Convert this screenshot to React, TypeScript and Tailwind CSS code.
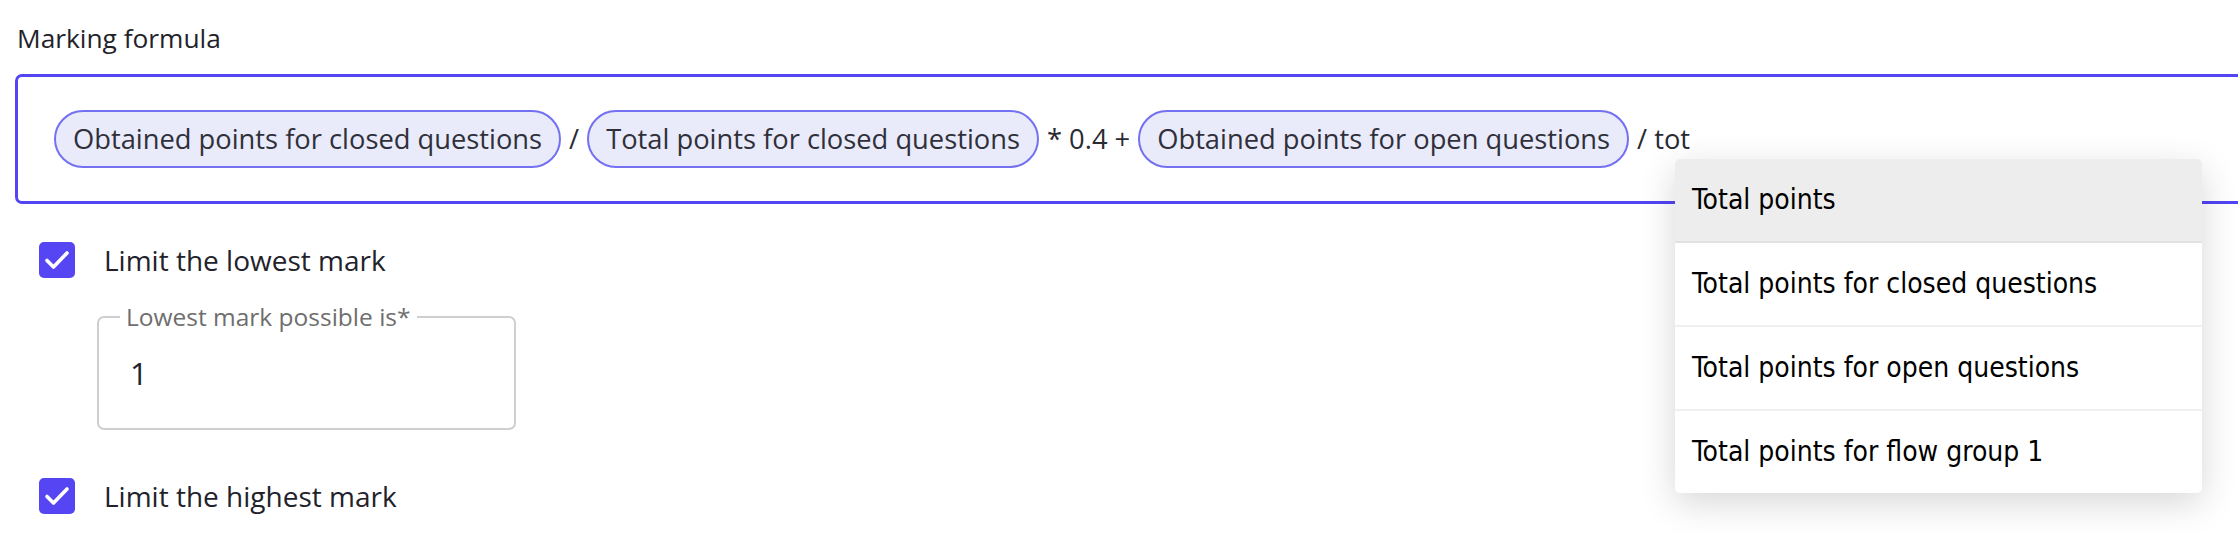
import React from "react";

const ui = { fontFamily: "'Open Sans', 'Noto Sans', sans-serif" };
const menuFont = { fontFamily: "'DejaVu Sans Condensed', 'DejaVu Sans', sans-serif" };

function Chip({ children }: { children: React.ReactNode }) {
  return (
    <span className="inline-flex h-[58px] items-center rounded-full border-2 border-[#7470f2] bg-[#e9ebfb] px-[17px] text-[27.3px] text-[#30303a] whitespace-nowrap">
      {children}
    </span>
  );
}

function Op({ children }: { children: React.ReactNode }) {
  return <span className="px-[8px] text-[27.3px] text-[#2a2a33] whitespace-nowrap">{children}</span>;
}

function CheckBox() {
  return (
    <span className="flex h-[36px] w-[36px] items-center justify-center rounded-[5px] bg-[#5545f3]">
      <svg width="36" height="36" viewBox="0 0 36 36" fill="none">
        <path d="M8 18.5l6.5 6.5L28 11" stroke="white" strokeWidth="3.6" strokeLinecap="round" strokeLinejoin="round" />
      </svg>
    </span>
  );
}

const suggestions = [
  "Total points",
  "Total points for closed questions",
  "Total points for open questions",
  "Total points for flow group 1",
];

export default function App() {
  return (
    <div className="relative h-[534px] w-[2238px] overflow-hidden bg-white" style={ui}>
      <div className="pl-[17px] pt-[22px] text-[26.3px] leading-[32px] text-[#22222a]">Marking formula</div>

      <div className="ml-[15px] mt-[20px] flex h-[130px] w-[2260px] items-center rounded-[7px] border-[3px] border-[#5344f4] pl-[36px]">
        <Chip>Obtained points for closed questions</Chip>
        <Op>/</Op>
        <Chip>Total points for closed questions</Chip>
        <Op>* 0.4 +</Op>
        <Chip>Obtained points for open questions</Chip>
        <Op>/ tot</Op>
      </div>

      <div className="ml-[39px] mt-[38px] flex items-center gap-[29px]">
        <CheckBox />
        <span className="text-[28px] leading-[36px] text-[#22222a]">Limit the lowest mark</span>
      </div>

      <fieldset className="ml-[97px] mt-[26px] h-[126px] w-[419px] rounded-[7px] border-2 border-[#cfcfcf] px-[21px]">
        <legend className="px-[6px] text-[24.5px] leading-[26px] text-[#6e6e6e]">Lowest mark possible is*</legend>
        <div className="pl-[10px] pt-[20px] text-[31px] text-[#22222a]">1</div>
      </fieldset>

      <div className="ml-[39px] mt-[48px] flex items-center gap-[29px]">
        <CheckBox />
        <span className="text-[28px] leading-[36px] text-[#22222a]">Limit the highest mark</span>
      </div>

      <ul
        className="absolute left-[1675px] top-[159px] w-[527px] overflow-hidden rounded-[5px] bg-white shadow-[0_10px_36px_rgba(0,0,0,0.16)]"
        style={menuFont}
      >
        {suggestions.map((s, i) => (
          <li
            key={s}
            className={
              i === 0
                ? "flex h-[84px] items-center border-b-2 border-[#e2e2e2] bg-[#ededed] pl-[17px] text-[28px] text-black"
                : i < suggestions.length - 1
                ? "flex h-[84px] items-center border-b-2 border-[#f0f0f0] pl-[17px] text-[28px] text-black"
                : "flex h-[82px] items-center pl-[17px] text-[28px] text-black"
            }
          >
            {s}
          </li>
        ))}
      </ul>
    </div>
  );
}
